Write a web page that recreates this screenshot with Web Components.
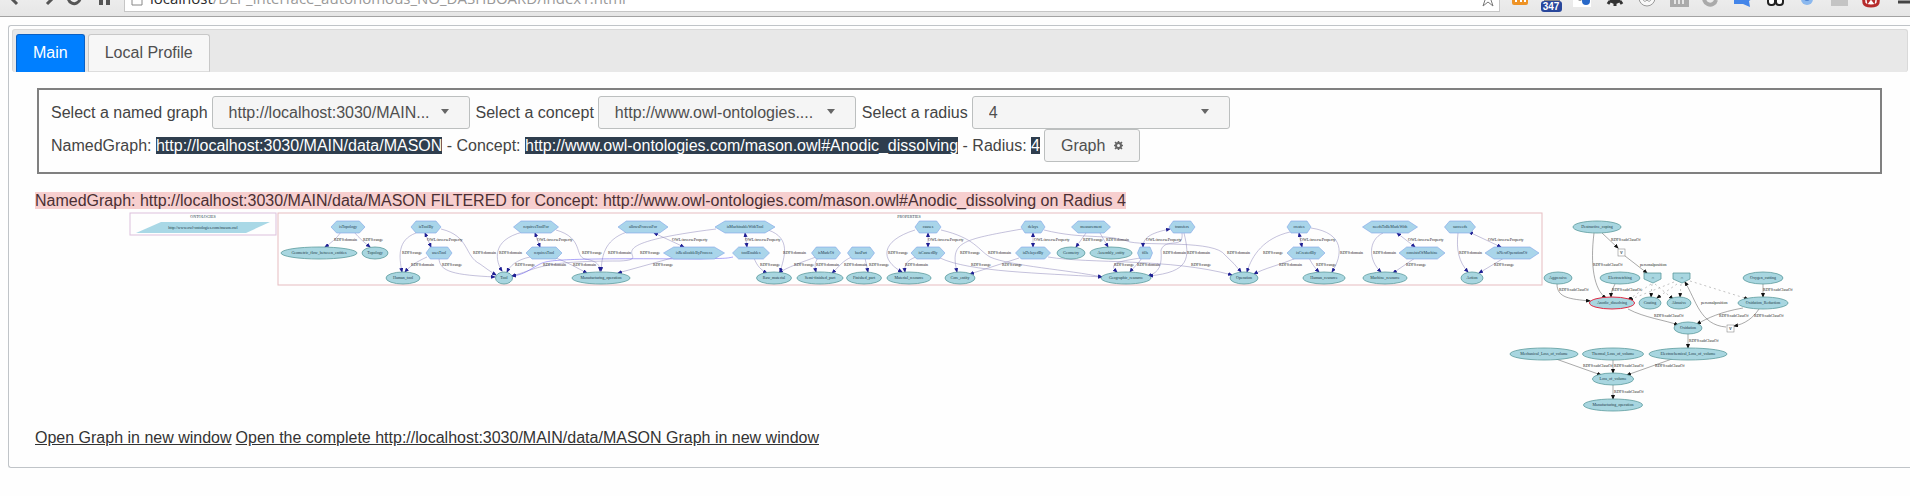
<!DOCTYPE html>
<html lang="en">
<head>
<meta charset="utf-8">
<title>DLP interface</title>
<style>
    body {
        margin: 0;
        background: #fefefe;
        color: #444;
        font-family: "Liberation Sans", Arial, sans-serif;
        font-size: 16px;
        line-height: 18px;
    }
</style>
</head>
<body>
    <browser-bar>
        <span slot="host">localhost</span><span slot="path">/DLP_interface_autonomous_NO_DASHBOARD/index1.html</span>
    </browser-bar>
    <app-tabs tabs="Main,Local Profile">
        <query-form></query-form>
        <graph-result>
            <span slot="title">NamedGraph: http://localhost:3030/MAIN/data/MASON FILTERED for Concept: http://www.owl-ontologies.com/mason.owl#Anodic_dissolving on Radius 4</span>
            <ontology-graph></ontology-graph>
            <a-link slot="links" href="#graph">Open Graph in new window</a-link>
            <a-link slot="links" href="#complete">Open the complete http://localhost:3030/MAIN/data/MASON Graph in new window</a-link>
        </graph-result>
    </app-tabs>

<script>
// Attach an open shadow root and fill it
function render(element, html) {
    const template = document.createElement("template");
    template.innerHTML = html;
    element.attachShadow({ mode: "open" }).appendChild(template.content.cloneNode(true));
    return element.shadowRoot;
}

// Toolbar icons, lower part of each one is what shows
const navIcons = {
    Back: '<path d="M17 -7L11 -1L17 5" fill="none" stroke="#555" stroke-width="3"/>',
    Forward: '<path d="M16 -7L22 -1L16 5" fill="none" stroke="#555" stroke-width="3"/>',
    Reload: '<path d="M18 0A6 6 0 1 1 16 -6" fill="none" stroke="#555" stroke-width="3"/>',
    Home: '<path d="M6 -4H17V6H13V0H10V6H6Z" fill="#555"/>'
};

const extensionIcons = {
    Feed: '<rect x="8" y="-8" width="16" height="14" rx="2" fill="#ee9326"/><path d="M12 3V-2M17 3V1M21 3V1" stroke="#fff" stroke-width="2"/>',
    Counter: '<path d="M8 1H24M10 -1V1M14 -1V1M19 -1V1" stroke="#222"/><rect x="5" y="2" width="21" height="11" rx="3" fill="#29479b"/><text x="15" y="11" text-anchor="middle" font-size="10" font-weight="bold" fill="#fff">347</text>',
    Share: '<rect x="5" y="-8" width="18" height="16" fill="#fff"/><circle cx="18" cy="2" r="4" fill="#2868c8"/><circle cx="12" cy="0" r="2" fill="#999"/>',
    Settings: '<circle cx="15" cy="-1" r="6" fill="#333"/><path d="M15 3V7M10 2L8 5M20 2L22 5" stroke="#333" stroke-width="3"/>',
    Face: '<circle cx="15" cy="-1" r="8" fill="#f8f8f8" stroke="#999"/><path d="M11 0Q12 4 15 1Q18 4 19 0" fill="none" stroke="#999"/>',
    Columns: '<rect x="6" y="-8" width="19" height="16" fill="#aaa"/><path d="M11 5V-2M15 5V-2M19 5V-2" stroke="#e5e5e5" stroke-width="2"/>',
    Circle: '<path d="M20 1A6 6 0 1 1 18 -5" fill="none" stroke="#aaa" stroke-width="4"/>',
    Translate: '<path d="M6 -4H16V-8L24 0L21 2L22 8L15 5H6Z" fill="#4385e9"/>',
    Glasses: '<g fill="#fff" stroke="#222" stroke-width="2"><rect x="8" y="-2" width="7" height="8" rx="3"/><rect x="16" y="-2" width="7" height="8" rx="3"/></g>',
    Drop: '<circle cx="15" cy="0" r="6" fill="#8bb8ee"/><circle cx="15" cy="-1" r="3" fill="#4d83d3"/>',
    Blank: '<rect x="7" y="-8" width="17" height="15" fill="#c4c4c4"/>',
    Shield: '<path d="M7 -6L8 4Q9 7 15 7Q21 7 22 4L23 -6" fill="#fff" stroke="#b62b2b" stroke-width="3"/><path d="M11 -3L12 3L15 -1L18 3L19 -3" fill="none" stroke="#b62b2b" stroke-width="2"/>',
    Menu: '<path d="M10 3H24" stroke="#444" stroke-width="3"/>'
};

const iconButtons = (icons) => Object.keys(icons).map((name) => `
    <button type="button" aria-label="${name}"><svg viewBox="0 -13 32 30">${icons[name]}</svg></button>`).join("");

class BrowserBar extends HTMLElement {
    constructor() {
        super();
        render(this, `
            <style>
                :host {
                    display: flex;
                    align-items: flex-end;
                    height: 16px;
                    overflow: hidden;
                    border-bottom: 1px solid #a3a3a3;
                    background: linear-gradient(#ececec, #e6e6e6);
                }
                nav { display: flex; flex: none; }
                .tools { width: 406px; overflow: hidden; }
                button {
                    flex: none;
                    width: 32px;
                    height: 30px;
                    padding: 0;
                    border: 0;
                    background: none;
                }
                nav:first-of-type button { width: 31px; }
                button svg { display: block; width: 32px; height: 30px; }
                .address {
                    display: flex;
                    flex: 1;
                    align-items: center;
                    height: 28px;
                    margin-bottom: 4px;
                    margin-right: 4px;
                    padding: 0 4px 0 6px;
                    box-sizing: border-box;
                    border: 1px solid #c6c6c6;
                    background: #fff;
                    color: #999;
                    font: 15px/24px "Open Sans", sans-serif;
                }
                .page, .star { flex: none; display: block; }
                .page { margin-right: 7px; }
                .star { margin-left: auto; }
                ::slotted([slot="host"]) { color: #2b2b2b; }
            </style>
            <nav>${iconButtons(navIcons)}</nav>
            <div class="address">
                <svg class="page" width="12" height="16" viewBox="0 0 12 16"><path d="M1 1H8L11 4V15H1Z" fill="none" stroke="#888"/></svg>
                <div class="url"><slot name="host"></slot><slot name="path"></slot></div>
                <svg class="star" width="14" height="20" viewBox="0 0 14 20"><path d="M7 3L9 8H14L10 12L12 18L7 14L2 18L4 12L0 8H5Z" fill="none" stroke="#777"/></svg>
            </div>
            <nav class="tools">${iconButtons(extensionIcons)}</nav>
        `);
    }
}

class AppTabs extends HTMLElement {
    constructor() {
        super();
        const tabs = this.getAttribute("tabs").split(",");
        render(this, `
            <style>
                :host {
                    display: block;
                    margin: 8px 0 28px 8px;
                    padding: 3px 2px 3px 3px;
                    border: 1px solid #c0c4c8;
                    border-right: 0;
                    border-radius: 3px 0 0 3px;
                }
                .header {
                    display: flex;
                    gap: 3px;
                    padding: 4px 3px 0;
                    border: 1px solid #d9d9d9;
                    border-bottom: 0;
                    border-radius: 3px;
                    background: #e8e8e8;
                }
                button {
                    height: 38px;
                    padding: 0 16px;
                    border: 1px solid #c8c8c8;
                    border-bottom-color: #ddd;
                    border-radius: 3px 3px 0 0;
                    background: #f7f7f7;
                    color: #4f4f4f;
                    font: inherit;
                }
                button[aria-selected="true"] {
                    border-color: #0a60c4;
                    border-bottom-color: #007fff;
                    background: #007fff;
                    color: #fff;
                }
                .content { padding: 16px 24px 17px 23px; }
            </style>
            <div class="header" role="tablist">
                ${tabs.map((tab, i) => `<button type="button" role="tab" aria-selected="${i === 0}">${tab}</button>`).join("")}
            </div>
            <div class="content" role="tabpanel"><slot></slot></div>
        `);
    }
}

class SelectField extends HTMLElement {
    constructor() {
        super();
        render(this, `
            <style>
                :host { display: flex; align-items: center; gap: 4px; }
                .box { position: relative; }
                select {
                    display: block;
                    width: 258px;
                    height: 33px;
                    padding: 0 32px 0 16px;
                    border: 1px solid #bcbfbf;
                    border-radius: 3px;
                    appearance: none;
                    background: #f5f5f5;
                    color: #4f4f4f;
                    font: inherit;
                }
                .box::after {
                    content: "";
                    position: absolute;
                    top: 13px;
                    right: 21px;
                    border: 4px solid transparent;
                    border-top: 5px solid #666;
                    border-bottom: 0;
                    pointer-events: none;
                }
            </style>
            <label for="field"><slot></slot></label>
            <div class="box"><select id="field"><option>${this.getAttribute("value")}</option></select></div>
        `);
    }
}

class ValueMark extends HTMLElement {
    constructor() {
        super();
        render(this, `
            <style>
                :host { display: inline; background: #2f3e4e; color: #fff; }
            </style>
            <slot></slot>`);
    }
}

class QueryForm extends HTMLElement {
    constructor() {
        super();
        render(this, `
            <style>
                :host { display: block; }
                fieldset {
                    margin: 0 2px;
                    padding: 6px 12px 10px;
                    border: 2px solid #808080;
                }
                .row { display: flex; flex-wrap: wrap; align-items: center; column-gap: 6px; }
                .values { column-gap: 4px; }
                button {
                    display: flex;
                    align-items: center;
                    gap: 9px;
                    height: 33px;
                    padding: 0 16px;
                    border: 1px solid #bcbfbf;
                    border-radius: 3px;
                    background: #f5f5f5;
                    color: #4f4f4f;
                    font: inherit;
                }
            </style>
            <fieldset>
                <div class="row">
                    <select-field value="http://localhost:3030/MAIN...">Select a named graph</select-field>
                    <select-field value="http://www.owl-ontologies....">Select a concept</select-field>
                    <select-field value="4">Select a radius</select-field>
                </div>
                <div class="row values">
                    <span>NamedGraph: <value-mark>http://localhost:3030/MAIN/data/MASON</value-mark> - Concept: <value-mark>http://www.owl-ontologies.com/mason.owl#Anodic_dissolving</value-mark> - Radius: <value-mark>4</value-mark></span>
                    <button type="button">Graph
                        <svg width="9" height="9" viewBox="0 0 9 9"><circle cx="4.5" cy="4.5" r="2.5" fill="none" stroke="#666" stroke-width="2"/><path d="M4.5 0V2M4.5 7V9M0 4.5H2M7 4.5H9M1 1L3 3M6 6L8 8M8 1L6 3M3 6L1 8" stroke="#666" stroke-width="1.5"/></svg>
                    </button>
                </div>
            </fieldset>
        `);
    }
}

class GraphResult extends HTMLElement {
    constructor() {
        super();
        render(this, `
            <style>
                :host { display: block; }
                p { margin: 18px 0 0; }
                mark { background: #f7cfcf; color: #4a2f33; }
                .links { display: flex; flex-wrap: wrap; column-gap: 4px; }
            </style>
            <p><mark><slot name="title"></slot></mark></p>
            <slot></slot>
            <div class="links"><slot name="links"></slot></div>
        `);
    }
}

class ALink extends HTMLElement {
    constructor() {
        super();
        render(this, `
            <style>
                :host { display: block; }
                a { color: #333; }
            </style>
            <a href="${this.getAttribute("href")}"><slot></slot></a>`);
    }
}

// Properties: x, y, width, label
const hexagons = [
    [348, 227, 34, "isTopology"], [426, 227, 30, "isToolBy"], [439, 253, 26, "usesTool"],
    [536, 227, 45, "requiresToolFor"], [544, 253, 36, "requiresTool"], [643, 227, 50, "allowsProcessFor"],
    [694, 253, 61, "isRealizableByProcess"], [745, 227, 60, "isMachinableWithTool"], [751, 253, 37, "toolEnables"],
    [826, 253, 29, "isMadeOf"], [861, 253, 27, "hasPart"], [928, 227, 26, "causes"], [928, 253, 34, "isCausedBy"],
    [1033, 227, 24, "delays"], [1033, 253, 35, "isDelayedBy"], [1091, 227, 39, "measurement"],
    [1145, 253, 15, "fills"], [1182, 227, 26, "transfers"], [1299, 227, 24, "creates"], [1306, 253, 38, "isCreatedBy"],
    [1390, 227, 55, "needsToBeMadeWith"], [1422, 253, 46, "consistsOfMachine"], [1460, 227, 31, "succeeds"],
    [1512, 253, 54, "isNextOperationOf"]
];

// Concepts: x, y, width, label
const ellipses = [
    [319, 253, 76, "Geometric_flow_between_entities"], [375, 253, 26, "Topology"], [403, 278, 34, "Human_tool"],
    [504, 278, 17, "Tool"], [601, 278, 58, "Manufacturing_operation"], [774, 278, 35, "Raw_material"],
    [820, 278, 46, "Semi-finished_part"], [864, 278, 35, "Finished_part"], [909, 278, 44, "Material_resource"],
    [960, 278, 30, "Core_entity"], [1071, 253, 28, "Geometry"], [1111, 253, 42, "Assembly_entity"],
    [1126, 278, 50, "Geographic_resource"], [1244, 278, 28, "Operation"], [1324, 278, 42, "Human_resource"],
    [1385, 278, 44, "Machine_resource"], [1472, 278, 22, "Action"],
    [1597, 227, 48, "Destructive_coping"], [1558, 278, 28, "Aggressive"], [1620, 278, 40, "Electroetching"],
    [1763, 278, 40, "Oxygen_cutting"], [1612, 303, 45, "Anodic_dissolving"], [1650, 303, 22, "Coating"],
    [1679, 303, 24, "Abrasive"], [1763, 303, 50, "Oxidation_Reduction"], [1688, 328, 28, "Oxidation"],
    [1544, 354, 68, "Mechanical_Loss_of_volume"], [1613, 354, 61, "Thermal_Loss_of_volume"],
    [1688, 354, 78, "Electrochemical_Loss_of_volume"], [1613, 379, 41, "Loss_of_volume"],
    [1613, 405, 59, "Manufacturing_operation"]
];

const edges = [
    "M341,232C337,238 331,243 325,247", "M354,232C359,238 365,243 370,247", "M416,233C397,240 399,257 402,272",
    "M441,229C470,236 464,256 480,264Q488,270 496,275", "M427,257C416,262 410,266 405,272",
    "M439,258C439,272 455,275 495,277", "M523,232C490,240 496,262 502,271",
    "M556,230C584,238 574,256 585,259C598,261 600,266 600,271", "M530,257C516,260 510,266 507,272",
    "M556,258C567,262 577,268 587,273", "M716,229C580,246 660,259 620,261C540,261 540,268 512,276",
    "M627,232C603,240 602,258 601,271", "M672,258L618,273", "M768,230C792,238 784,258 780,272",
    "M754,258C757,266 761,270 767,273", "M816,257C805,261 785,268 779,273", "M818,258C814,263 815,268 816,272",
    "M852,257C843,260 838,268 832,273", "M865,258L868,272", "M915,230C880,241 880,260 902,272",
    "M941,230C975,238 978,250 990,257C1010,266 1070,270 1102,277", "M916,257C907,260 904,265 905,272",
    "M940,258C970,272 1040,273 1102,277", "M1022,229C960,240 950,242 957,272", "M1019,258L970,274",
    "M1044,230C1085,240 1105,233 1130,242C1150,246 1215,240 1225,255Q1235,264 1241,272",
    "M1048,257C1090,264 1170,258 1232,275", "M1086,233L1076,247", "M1100,233L1108,247",
    "M1140,258C1124,261 1106,262 1117,272", "M1142,258C1138,264 1133,268 1130,272",
    "M1182,233C1184,250 1166,237 1161,250C1162,265 1160,272 1148,276", "M1184,233C1190,258 1190,272 1149,276",
    "M1290,232C1264,238 1252,255 1247,272", "M1311,228C1345,233 1343,255 1332,272",
    "M1296,258C1280,265 1265,268 1254,274", "M1309,258C1312,264 1315,268 1319,272",
    "M1383,233C1368,240 1368,260 1381,272", "M1415,258L1393,273", "M1458,233C1456,250 1459,262 1468,272",
    "M1504,258L1479,273"
];
const strongEdge = "M733,257C725,259 720,258 700,259C560,258 548,260 540,264C530,269 524,275 512,276";

const inverseEdges = [
    "M425,233L431,247", "M535,233L540,247", "M654,233L684,247", "M745,233L747,247", "M928,233L928,247",
    "M1033,233L1033,247", "M1170,229C1150,233 1143,238 1143,247", "M1299,233L1302,247", "M1397,233L1415,247",
    "M1469,232L1501,247"
];

const classEdges = [
    "M1594,233C1590,265 1594,290 1606,298", "M1602,233L1618,248", "M1625,256L1647,273",
    "M1557,284C1557,298 1570,299 1590,301", "M1615,284Q1611,290 1611,297", "M1763,284L1763,297",
    "M1743,308C1720,312 1708,318 1697,324", "M1759,309C1753,318 1745,324 1734,326",
    "M1726,327C1700,325 1696,300 1685,282", "M1628,309C1645,318 1665,320 1678,325", "M1688,334L1688,348",
    "M1556,359L1601,375", "M1613,359L1613,373", "M1672,359L1627,375", "M1613,385L1613,399"
];

const dottedEdges = [
    "M1651,284L1628,300", "M1652,284L1651,297", "M1655,284L1673,299", "M1677,284L1657,298",
    "M1681,284L1680,297", "M1674,282L1629,300", "M1690,281L1748,299"
];

// Edge captions: text, then x positions by row
const captions = [
    ["RDFS:domain", { 240: [334, 1106], 253: [473, 499, 608, 783, 988, 1163, 1187, 1227, 1340, 1373, 1459], 265: [411, 543, 573, 816, 844, 905, 1137, 1279] }],
    ["RDFS:range", { 240: [363, 1083], 253: [402, 582, 640, 888, 960, 1263], 265: [442, 515, 653, 760, 794, 869, 971, 1002, 1114, 1191, 1316, 1406, 1494] }],
    ["OWL:inverseProperty", { 240: [427, 537, 672, 745, 928, 1034, 1146, 1300, 1408, 1488] }],
    ["RDFS:subClassOf", { 240: [1611], 265: [1593], 290: [1559, 1612, 1763], 316: [1654, 1719, 1754], 341: [1689], 366: [1583, 1614, 1655], 392: [1614] }],
    ["personalposition", { 265: [1640], 303: [1701] }]
];

class OntologyGraph extends HTMLElement {
    constructor() {
        super();
        const hexagon = ([x, y, w, label]) => {
            const h = w / 2;
            const s = h * 2 / 3;
            return `<polygon class="property" points="${x - h},${y} ${x - s},${y - 6} ${x + s},${y - 6} ${x + h},${y} ${x + s},${y + 6} ${x - s},${y + 6}"/>
                <text class="name" x="${x}" y="${y + 1}">${label}</text>`;
        };
        const ellipse = ([x, y, w, label]) => `
            <ellipse class="concept${label === "Anodic_dissolving" ? " current" : ""}" cx="${x}" cy="${y}" rx="${w / 2}" ry="6"/>
            <text class="name" x="${x}" y="${y + 1}">${label}</text>`;
        const paths = (list, cls) => list.map((d) => `<path class="${cls}" d="${d}"/>`).join("");
        const texts = captions.map(([text, rows]) => Object.keys(rows).map((y) =>
            rows[y].map((x) => `<text x="${x}" y="${+y + 1}">${text}</text>`).join("")).join("")).join("");

        render(this, `
            <style>
                :host { display: block; }
                svg { display: block; width: 100%; height: auto; }
                text { font: 4px "Liberation Serif", serif; fill: #222; }
                .name, .title { text-anchor: middle; fill: #1c3a46; }
                path { fill: none; stroke-width: 0.5; }
                .edge { stroke: #8a84b8; marker-end: url(#blue); }
                .strong { stroke: #5a4df0; }
                .inverse { marker-start: url(#blue); }
                .class { stroke: #555; marker-end: url(#black); }
                .dotted { stroke: #888; stroke-dasharray: 2 3; }
                .property { fill: #a9d5ea; stroke: #7fa3e8; stroke-width: 0.6; }
                .concept { fill: #a8d6e0; stroke: #5b9b9d; stroke-width: 0.8; }
                .current { stroke: #e02b45; stroke-width: 1; }
                .group { fill: none; stroke: #e6bcc0; }
                .ontologies { stroke: #dcc0dc; }
                .blank { fill: #fff; stroke: #777; stroke-width: 0.5; }
            </style>
            <svg viewBox="35 210 1849 219" role="img" aria-label="Ontology graph">
                <defs>
                    <marker id="blue" markerUnits="userSpaceOnUse" markerWidth="5" markerHeight="4" refX="4" refY="2" orient="auto-start-reverse"><path d="M0 0L5 2L0 4Z" style="fill:#1f1f93"/></marker>
                    <marker id="black" markerUnits="userSpaceOnUse" markerWidth="5" markerHeight="4" refX="4" refY="2" orient="auto"><path d="M0 0L5 2L0 4Z" style="fill:#111"/></marker>
                </defs>
                <rect class="group ontologies" x="130" y="213" width="146" height="22"/>
                <text class="title" x="203" y="218">ONTOLOGIES</text>
                <polygon fill="#a9d8e6" points="161,222 270,222 246,233 136,233"/>
                <text class="name" x="203" y="229">http://www.owl-ontologies.com/mason.owl</text>
                <rect class="group" x="278" y="213" width="1264" height="72"/>
                <text class="title" x="909" y="218">PROPERTIES</text>
                ${paths(edges, "edge")}
                ${paths([strongEdge], "edge strong")}
                ${paths(inverseEdges, "edge inverse")}
                ${paths(classEdges, "class")}
                ${paths(dottedEdges, "class dotted")}
                ${hexagons.map(hexagon).join("")}
                ${ellipses.map(ellipse).join("")}
                <polygon class="concept" points="1644,273 1661,273 1661,279 1653,283 1644,279"/>
                <text class="name" x="1653" y="279">∩</text>
                <polygon class="concept" points="1673,273 1690,273 1690,279 1682,283 1673,279"/>
                <text class="name" x="1682" y="279">∩</text>
                <rect class="blank" x="1618" y="249" width="7" height="7"/>
                <text class="name" x="1621" y="254">∀</text>
                <rect class="blank" x="1727" y="325" width="7" height="7"/>
                <text class="name" x="1730" y="330">∀</text>
                ${texts}
            </svg>
        `);
    }
}

customElements.define("browser-bar", BrowserBar);
customElements.define("app-tabs", AppTabs);
customElements.define("select-field", SelectField);
customElements.define("value-mark", ValueMark);
customElements.define("query-form", QueryForm);
customElements.define("graph-result", GraphResult);
customElements.define("a-link", ALink);
customElements.define("ontology-graph", OntologyGraph);
</script>
</body>
</html>
